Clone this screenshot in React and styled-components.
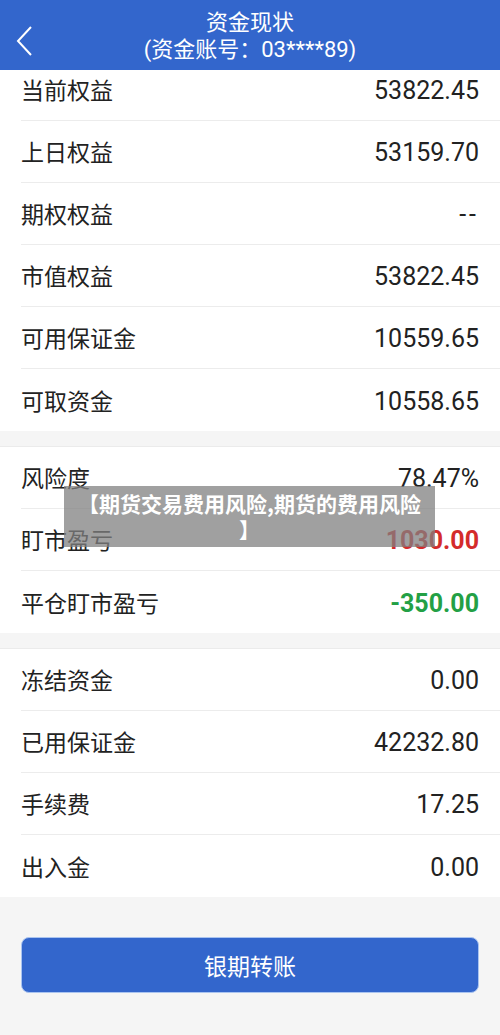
import styled, { createGlobalStyle } from "styled-components";

const GlobalStyle = createGlobalStyle`
  html, body {
    margin: 0;
    padding: 0;
    background: #f5f5f5;
    font-family: Roboto, "Noto Sans CJK SC", sans-serif;
  }
`;

const Page = styled.div`
  position: relative;
  width: 500px;
  height: 1035px;
  overflow: hidden;
  background: #f5f5f5;
`;

const Header = styled.header`
  position: relative;
  z-index: 2;
  height: 70px;
  background: #3366cc;
  color: #fff;
  display: flex;
  flex-direction: column;
  align-items: center;
  justify-content: center;
  font-family: "Noto Sans CJK SC", sans-serif;
`;

const Title = styled.div`
  font-size: 22px;
  line-height: 30px;
`;

const SubTitle = styled.div`
  font-size: 22px;
  line-height: 30px;
  font-family: Roboto, "Noto Sans CJK SC", sans-serif;
`;

const BackButton = styled.button`
  position: absolute;
  left: 10px;
  top: 22px;
  width: 28px;
  height: 38px;
  padding: 0;
  border: none;
  background: none;
  display: flex;
  align-items: center;
  justify-content: center;
`;

const Body = styled.div`
  margin-top: -11px;
  display: flex;
  flex-direction: column;
  gap: 15px;
`;

const Group = styled.section`
  background: #fff;
  border-top: ${({ $top }) => ($top ? "1px solid #ebebeb" : "none")};
`;

const Row = styled.div`
  height: 62px;
  margin-left: 21px;
  padding-right: 21px;
  display: flex;
  align-items: center;
  justify-content: space-between;
  border-bottom: 1px solid #ececec;
  box-sizing: border-box;

  &:last-child {
    border-bottom: none;
  }
`;

const Label = styled.span`
  font-family: "Noto Sans CJK SC", sans-serif;
  font-size: 23px;
  color: #222;
  margin-top: -1px;
`;

const Value = styled.span`
  font-family: Roboto, "Noto Sans CJK SC", sans-serif;
  font-size: 25px;
  letter-spacing: ${({ $wide }) => ($wide ? "3px" : "0")};
  color: ${({ $tone }) =>
    $tone === "up" ? "#d42b2b" : $tone === "down" ? "#23a045" : "#222"};
  font-weight: ${({ $tone }) => ($tone ? 700 : 400)};
  margin-top: 2px;
`;

const Footer = styled.div`
  padding: 40px 21px 0;
`;

const TransferButton = styled.button`
  width: 100%;
  height: 56px;
  border: 1px solid #aac4f0;
  border-radius: 8px;
  background: #3366cc;
  color: #fff;
  font-family: "Noto Sans CJK SC", sans-serif;
  font-size: 23px;
`;

const Watermark = styled.div`
  position: absolute;
  z-index: 3;
  left: 64px;
  top: 486px;
  width: 371px;
  height: 61px;
  box-sizing: border-box;
  padding: 4px 14px;
  background: rgba(128, 128, 128, 0.75);
  color: #fff;
  font-family: "Noto Sans CJK SC", sans-serif;
  font-weight: 700;
  font-size: 21px;
  line-height: 26px;
  text-align: center;
  line-break: anywhere;
`;

const groups = [
  [
    ["当前权益", "53822.45"],
    ["上日权益", "53159.70"],
    ["期权权益", "--"],
    ["市值权益", "53822.45"],
    ["可用保证金", "10559.65"],
    ["可取资金", "10558.65"],
  ],
  [
    ["风险度", "78.47%"],
    ["盯市盈亏", "1030.00", "up"],
    ["平仓盯市盈亏", "-350.00", "down"],
  ],
  [
    ["冻结资金", "0.00"],
    ["已用保证金", "42232.80"],
    ["手续费", "17.25"],
    ["出入金", "0.00"],
  ],
];

export default function App() {
  return (
    <Page>
      <GlobalStyle />
      <Header>
        <BackButton aria-label="返回">
          <svg width="20" height="32" viewBox="0 0 20 32">
            <path d="M17 2 L4 16 L17 30" fill="none" stroke="#fff" strokeWidth="2" />
          </svg>
        </BackButton>
        <Title>资金现状</Title>
        <SubTitle>(资金账号：03****89)</SubTitle>
      </Header>
      <Body>
        {groups.map((rows, gi) => (
          <Group key={gi} $top={gi > 0}>
            {rows.map(([label, value, tone]) => (
              <Row key={label}>
                <Label>{label}</Label>
                <Value $tone={tone} $wide={value === "--"}>
                  {value}
                </Value>
              </Row>
            ))}
          </Group>
        ))}
      </Body>
      <Footer>
        <TransferButton>银期转账</TransferButton>
      </Footer>
      <Watermark>【期货交易费用风险,期货的费用风险】</Watermark>
    </Page>
  );
}
